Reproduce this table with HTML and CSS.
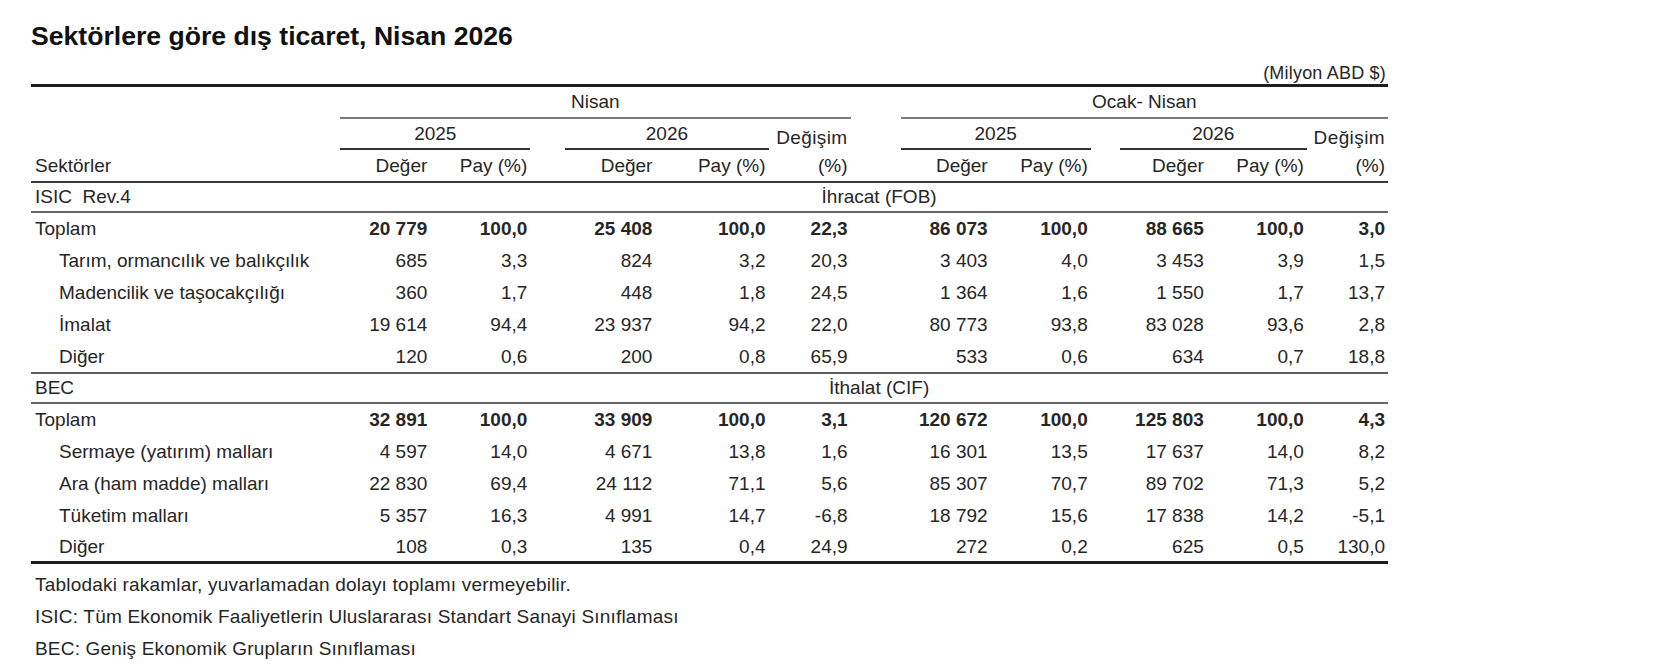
FILE: index.html
```html
<!DOCTYPE html>
<html lang="tr">
<head>
    <meta charset="UTF-8">
    <meta name="viewport" content="width=device-width, initial-scale=1.0">
    <title>Sektörlere göre dış ticaret, Nisan 2026</title>
    <link rel="stylesheet" href="styles.css">
</head>
<body>
    <div class="page">
        <h1 class="title">Sektörlere göre dış ticaret, Nisan 2026</h1>

        <div class="report">
            <div class="unit">(Milyon ABD $)</div>

            <table class="trade">
                <colgroup>
                    <col class="c-label">
                    <col class="c-val">
                    <col class="c-pay">
                    <col class="c-gap1">
                    <col class="c-val">
                    <col class="c-pay2">
                    <col class="c-chg">
                    <col class="c-gap2">
                    <col class="c-val">
                    <col class="c-pay">
                    <col class="c-gap3">
                    <col class="c-val2">
                    <col class="c-pay">
                    <col class="c-chg2">
                </colgroup>
                <thead>
                    <tr class="row-period">
                        <td></td>
                        <td colspan="6" class="period">Nisan</td>
                        <td></td>
                        <td colspan="6" class="period">Ocak- Nisan</td>
                    </tr>
                    <tr class="row-year">
                        <td></td>
                        <td colspan="2" class="year">2025</td>
                        <td></td>
                        <td colspan="2" class="year">2026</td>
                        <td class="chg-top">Değişim</td>
                        <td></td>
                        <td colspan="2" class="year">2025</td>
                        <td></td>
                        <td colspan="2" class="year">2026</td>
                        <td class="chg-top">Değişim</td>
                    </tr>
                    <tr class="row-cols">
                        <td class="label">Sektörler</td>
                        <td>Değer</td>
                        <td>Pay (%)</td>
                        <td></td>
                        <td>Değer</td>
                        <td>Pay (%)</td>
                        <td>(%)</td>
                        <td></td>
                        <td>Değer</td>
                        <td>Pay (%)</td>
                        <td></td>
                        <td>Değer</td>
                        <td>Pay (%)</td>
                        <td>(%)</td>
                    </tr>
                </thead>
                <tbody>
                    <tr class="row-section">
                        <td class="label">ISIC&nbsp; Rev.4</td>
                        <td colspan="13" class="section">İhracat (FOB)</td>
                    </tr>
                    <tr class="total">
                        <td class="label">Toplam</td>
                        <td>20 779</td><td>100,0</td><td></td>
                        <td>25 408</td><td>100,0</td><td>22,3</td><td></td>
                        <td>86 073</td><td>100,0</td><td></td>
                        <td>88 665</td><td>100,0</td><td>3,0</td>
                    </tr>
                    <tr>
                        <td class="label sub">Tarım, ormancılık ve balıkçılık</td>
                        <td>685</td><td>3,3</td><td></td>
                        <td>824</td><td>3,2</td><td>20,3</td><td></td>
                        <td>3 403</td><td>4,0</td><td></td>
                        <td>3 453</td><td>3,9</td><td>1,5</td>
                    </tr>
                    <tr>
                        <td class="label sub">Madencilik ve taşocakçılığı</td>
                        <td>360</td><td>1,7</td><td></td>
                        <td>448</td><td>1,8</td><td>24,5</td><td></td>
                        <td>1 364</td><td>1,6</td><td></td>
                        <td>1 550</td><td>1,7</td><td>13,7</td>
                    </tr>
                    <tr>
                        <td class="label sub">İmalat</td>
                        <td>19 614</td><td>94,4</td><td></td>
                        <td>23 937</td><td>94,2</td><td>22,0</td><td></td>
                        <td>80 773</td><td>93,8</td><td></td>
                        <td>83 028</td><td>93,6</td><td>2,8</td>
                    </tr>
                    <tr class="group-end">
                        <td class="label sub">Diğer</td>
                        <td>120</td><td>0,6</td><td></td>
                        <td>200</td><td>0,8</td><td>65,9</td><td></td>
                        <td>533</td><td>0,6</td><td></td>
                        <td>634</td><td>0,7</td><td>18,8</td>
                    </tr>
                    <tr class="row-section">
                        <td class="label">BEC</td>
                        <td colspan="13" class="section">İthalat (CIF)</td>
                    </tr>
                    <tr class="total">
                        <td class="label">Toplam</td>
                        <td>32 891</td><td>100,0</td><td></td>
                        <td>33 909</td><td>100,0</td><td>3,1</td><td></td>
                        <td>120 672</td><td>100,0</td><td></td>
                        <td>125 803</td><td>100,0</td><td>4,3</td>
                    </tr>
                    <tr>
                        <td class="label sub">Sermaye (yatırım) malları</td>
                        <td>4 597</td><td>14,0</td><td></td>
                        <td>4 671</td><td>13,8</td><td>1,6</td><td></td>
                        <td>16 301</td><td>13,5</td><td></td>
                        <td>17 637</td><td>14,0</td><td>8,2</td>
                    </tr>
                    <tr>
                        <td class="label sub">Ara (ham madde) malları</td>
                        <td>22 830</td><td>69,4</td><td></td>
                        <td>24 112</td><td>71,1</td><td>5,6</td><td></td>
                        <td>85 307</td><td>70,7</td><td></td>
                        <td>89 702</td><td>71,3</td><td>5,2</td>
                    </tr>
                    <tr>
                        <td class="label sub">Tüketim malları</td>
                        <td>5 357</td><td>16,3</td><td></td>
                        <td>4 991</td><td>14,7</td><td>-6,8</td><td></td>
                        <td>18 792</td><td>15,6</td><td></td>
                        <td>17 838</td><td>14,2</td><td>-5,1</td>
                    </tr>
                    <tr class="table-end">
                        <td class="label sub">Diğer</td>
                        <td>108</td><td>0,3</td><td></td>
                        <td>135</td><td>0,4</td><td>24,9</td><td></td>
                        <td>272</td><td>0,2</td><td></td>
                        <td>625</td><td>0,5</td><td>130,0</td>
                    </tr>
                </tbody>
            </table>

            <div class="notes">
                <p>Tablodaki rakamlar, yuvarlamadan dolayı toplamı vermeyebilir.</p>
                <p>ISIC: Tüm Ekonomik Faaliyetlerin Uluslararası Standart Sanayi Sınıflaması</p>
                <p>BEC: Geniş Ekonomik Grupların Sınıflaması</p>
            </div>
        </div>
    </div>
</body>
</html>
```

FILE: styles.css
```css
/* General Reset */
* {
    margin: 0;
    padding: 0;
    box-sizing: border-box;
}

body {
    font-family: "Liberation Sans", Arial, sans-serif;
    background-color: #ffffff;
    color: #262626;
}

.page {
    padding: 21px 0 0 31px;
}

/* Title */
.title {
    font-size: 26.6px;
    line-height: 30px;
    font-weight: bold;
    color: #111111;
}

/* Table block */
.report {
    width: 1357px;
    margin-top: 11px;
}

.unit {
    text-align: right;
    font-size: 18px;
    line-height: 22px;
    padding-right: 2px;
    letter-spacing: 0.2px;
}

.trade {
    width: 1357px;
    table-layout: fixed;
    border-collapse: separate;
    border-spacing: 0;
    border-top: 3px solid #1e1e1e;
    font-size: 19px;
}

.c-label { width: 309px; }
.c-val { width: 90px; }
.c-val2 { width: 87px; }
.c-pay { width: 100px; }
.c-pay2 { width: 113px; }
.c-chg { width: 82px; }
.c-chg2 { width: 81px; }
.c-gap1 { width: 35px; }
.c-gap2 { width: 50px; }
.c-gap3 { width: 29px; }

.trade td {
    padding: 0 3px 0 0;
    text-align: right;
    vertical-align: middle;
    white-space: nowrap;
}

.trade td.label {
    text-align: left;
    padding-left: 4px;
}

.trade td.sub {
    padding-left: 28px;
}

/* Header rows */
.row-period td {
    height: 32px;
}

.row-period .period {
    text-align: center;
    padding-right: 0;
    border-bottom: 2px solid #7a7a7a;
}

.row-year td {
    height: 31px;
}

.row-year .year {
    text-align: center;
    padding-right: 0;
    border-bottom: 2px solid #333333;
}

.row-year .chg-top {
    vertical-align: bottom;
    padding-bottom: 1px;
    letter-spacing: 0.4px;
}

.row-cols td {
    height: 33px;
    border-bottom: 2px solid #3a3a3a;
}

/* Section rows */
.row-section td {
    height: 30px;
    border-bottom: 2px solid #666666;
}

.row-section .section {
    text-align: center;
    padding: 0 0 0 30px;
}

/* Body rows */
.trade tbody tr td {
    height: 32px;
}

.trade tbody tr.row-section td {
    height: 30px;
}

.trade tbody tr.group-end td {
    height: 33px;
    border-bottom: 2px solid #5c5c5c;
}

.trade tbody tr.total td {
    font-weight: bold;
}

.trade tbody tr.total td.label {
    font-weight: normal;
}

.trade tbody tr.table-end td {
    border-bottom: 3px solid #1e1e1e;
}

/* Footnotes */
.notes {
    margin-top: 5px;
    font-size: 19px;
    letter-spacing: 0.2px;
}

.notes p {
    line-height: 32px;
    padding-left: 4px;
}
```
